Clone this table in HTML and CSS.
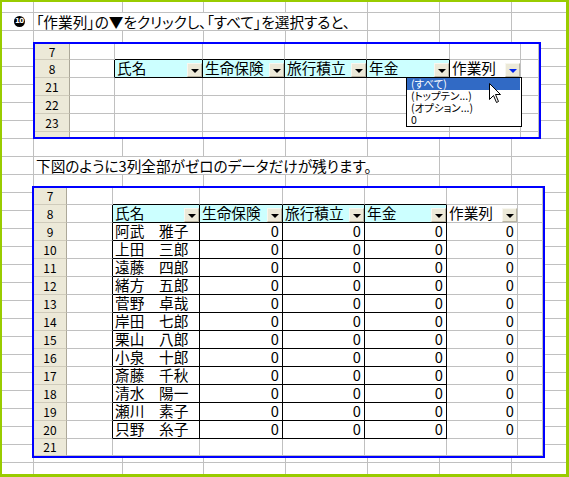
FILE: index.html
```html
<!DOCTYPE html>
<html lang="ja">
<head>
<meta charset="utf-8">
<title>作業列</title>
<link rel="stylesheet" href="styles.css">
</head>
<body>
<div class="frame">
  <div class="note">
    <span class="note-mark"><span class="badge">10</span></span>
    <span class="note-text w1">「作業列」の▼をクリックし、「すべて」を選択すると、</span>
  </div>

  <div class="shot shot1">
    <div class="sheet sheet1">
      <div class="rh">7</div><div class="c"></div><div class="c kb"></div><div class="c kb"></div><div class="c kb"></div><div class="c kb"></div><div class="c"></div><div class="c"></div>
      <div class="rh">8</div><div class="c kr"></div>
      <div class="c k hd"><span>氏名</span><span class="btn"></span></div>
      <div class="c k hd"><span>生命保険</span><span class="btn"></span></div>
      <div class="c k hd"><span>旅行積立</span><span class="btn"></span></div>
      <div class="c k hd"><span>年金</span><span class="btn"></span></div>
      <div class="c hb"><span>作業列</span><span class="btn active"></span></div><div class="c"></div>
      <div class="rh">21</div><div class="c"></div><div class="c"></div><div class="c"></div><div class="c"></div><div class="c"></div><div class="c"></div><div class="c"></div>
      <div class="rh">22</div><div class="c"></div><div class="c"></div><div class="c"></div><div class="c"></div><div class="c"></div><div class="c"></div><div class="c"></div>
      <div class="rh">23</div><div class="c"></div><div class="c"></div><div class="c"></div><div class="c"></div><div class="c"></div><div class="c"></div><div class="c"></div>
      <div class="rh rh-cut"></div><div class="c"></div><div class="c"></div><div class="c"></div><div class="c"></div><div class="c"></div><div class="c"></div><div class="c"></div>
    </div>
    <div class="dd">
      <div class="dd-item sel">(すべて)</div>
      <div class="dd-item">(トップテン...)</div>
      <div class="dd-item">(オプション...)</div>
      <div class="dd-item">0</div>
    </div>
    <svg class="cursor" width="13" height="21" viewBox="0 0 13 21"><path d="M0.5 0.5 V16.5 L4.5 12.5 L7.5 19.5 L9.5 18.5 L6.5 11.5 H11.5 Z" fill="#fff" stroke="#000" stroke-width="1"/></svg>
  </div>

  <div class="note note2">
    <span class="note-mark"></span>
    <span class="note-text w2">下図のように3列全部がゼロのデータだけが残ります。</span>
  </div>

  <div class="shot shot2">
    <div class="sheet sheet2">
      <div class="rh">7</div><div class="c"></div><div class="c kb"></div><div class="c kb"></div><div class="c kb"></div><div class="c kb"></div><div class="c"></div><div class="c"></div>
      <div class="rh">8</div><div class="c kr"></div>
      <div class="c k hd"><span>氏名</span><span class="btn"></span></div>
      <div class="c k hd"><span>生命保険</span><span class="btn"></span></div>
      <div class="c k hd"><span>旅行積立</span><span class="btn"></span></div>
      <div class="c k hd"><span>年金</span><span class="btn"></span></div>
      <div class="c hb"><span>作業列</span><span class="btn"></span></div><div class="c"></div>

      <div class="rh">9</div><div class="c kr"></div><div class="c k">阿武　雅子</div><div class="c k num">0</div><div class="c k num">0</div><div class="c k num">0</div><div class="c num">0</div><div class="c"></div>
      <div class="rh">10</div><div class="c kr"></div><div class="c k">上田　三郎</div><div class="c k num">0</div><div class="c k num">0</div><div class="c k num">0</div><div class="c num">0</div><div class="c"></div>
      <div class="rh">11</div><div class="c kr"></div><div class="c k">遠藤　四郎</div><div class="c k num">0</div><div class="c k num">0</div><div class="c k num">0</div><div class="c num">0</div><div class="c"></div>
      <div class="rh">12</div><div class="c kr"></div><div class="c k">緒方　五郎</div><div class="c k num">0</div><div class="c k num">0</div><div class="c k num">0</div><div class="c num">0</div><div class="c"></div>
      <div class="rh">13</div><div class="c kr"></div><div class="c k">菅野　卓哉</div><div class="c k num">0</div><div class="c k num">0</div><div class="c k num">0</div><div class="c num">0</div><div class="c"></div>
      <div class="rh">14</div><div class="c kr"></div><div class="c k">岸田　七郎</div><div class="c k num">0</div><div class="c k num">0</div><div class="c k num">0</div><div class="c num">0</div><div class="c"></div>
      <div class="rh">15</div><div class="c kr"></div><div class="c k">栗山　八郎</div><div class="c k num">0</div><div class="c k num">0</div><div class="c k num">0</div><div class="c num">0</div><div class="c"></div>
      <div class="rh">16</div><div class="c kr"></div><div class="c k">小泉　十郎</div><div class="c k num">0</div><div class="c k num">0</div><div class="c k num">0</div><div class="c num">0</div><div class="c"></div>
      <div class="rh">17</div><div class="c kr"></div><div class="c k">斎藤　千秋</div><div class="c k num">0</div><div class="c k num">0</div><div class="c k num">0</div><div class="c num">0</div><div class="c"></div>
      <div class="rh">18</div><div class="c kr"></div><div class="c k">清水　陽一</div><div class="c k num">0</div><div class="c k num">0</div><div class="c k num">0</div><div class="c num">0</div><div class="c"></div>
      <div class="rh">19</div><div class="c kr"></div><div class="c k">瀬川　素子</div><div class="c k num">0</div><div class="c k num">0</div><div class="c k num">0</div><div class="c num">0</div><div class="c"></div>
      <div class="rh">20</div><div class="c kr"></div><div class="c k">只野　糸子</div><div class="c k num">0</div><div class="c k num">0</div><div class="c k num">0</div><div class="c num">0</div><div class="c"></div>
      <div class="rh">21</div><div class="c"></div><div class="c"></div><div class="c"></div><div class="c"></div><div class="c"></div><div class="c"></div><div class="c"></div>
    </div>
  </div>
</div>
</body>
</html>
```
FILE: styles.css
```css
* { box-sizing: border-box; }
html, body { margin: 0; padding: 0; background: #fff; }
body {
  width: 569px;
  height: 477px;
  overflow: hidden;
  font-family: "Noto Sans CJK JP", "Noto Sans", sans-serif;
  color: #000;
}
.frame {
  width: 569px;
  height: 477px;
  border-style: solid;
  border-color: #99cc00;
  border-width: 2px 3px 3px 2px;
  background-color: #fff;
  background-image:
    linear-gradient(#c0c0c0, #c0c0c0),
    linear-gradient(#c0c0c0, #c0c0c0),
    linear-gradient(#c0c0c0, #c0c0c0),
    linear-gradient(#c0c0c0, #c0c0c0),
    linear-gradient(#c0c0c0, #c0c0c0),
    linear-gradient(#c0c0c0, #c0c0c0),
    linear-gradient(#c0c0c0, #c0c0c0),
    linear-gradient(to bottom, #c0c0c0 1px, transparent 1px);
  background-size: 1px 100%, 1px 100%, 1px 100%, 1px 100%, 1px 100%, 1px 100%, 1px 100%, 100% 18px;
  background-position: 31px 0, 120px 0, 201px 0, 283px 0, 365px 0, 437px 0, 509px 0, 0 10px;
  background-repeat: no-repeat, no-repeat, no-repeat, no-repeat, no-repeat, no-repeat, no-repeat, repeat-y;
}

/* caption rows */
.note {
  display: flex;
  height: 17px;
  margin-top: 11px;
}
.note2 { margin-top: 18px; }
.note-mark {
  width: 32px;
  flex: none;
  display: flex;
  align-items: center;
  padding-left: 12px;
}
.badge {
  width: 11px;
  height: 11px;
  border-radius: 50%;
  background: #000;
  color: #fff;
  font: bold 7px/11px "DejaVu Sans", sans-serif;
  letter-spacing: -0.6px;
  text-align: center;
  text-indent: -0.5px;
}
.note-text {
  background: #fff;
  padding-left: 2px;
  font-size: 14.67px;
  line-height: 17px;
  white-space: nowrap;
  font-feature-settings: "palt";
}
.w1 { width: 332px; }
.w2 { width: 404px; }

/* embedded sheet shots */
.shot {
  position: relative;
  background: #fff;
  border: 2px solid #0000ff;
}
.shot1 { margin: 12px 0 0 31px; width: 508px; height: 97px; }
.shot2 { margin: 12px 0 0 30px; width: 513px; height: 272px; }

.sheet {
  display: grid;
  height: 100%;
  overflow: hidden;
  font-size: 14.67px;
  line-height: 16px;
  font-feature-settings: "palt";
}
.sheet1 {
  grid-template-columns: 35px 45px 88px 82px 82px 83px 71px 1fr;
  grid-template-rows: 16px repeat(5, 18px);
}
.sheet2 {
  grid-template-columns: 33px 46px 87px 83px 82px 82px 71px 1fr;
  grid-template-rows: 17px repeat(13, 18px) 17px;
}

.rh {
  background: #ece9d8;
  border-right: 1px solid #aca899;
  border-bottom: 1px solid #cfcbbb;
  font-size: 12px;
  line-height: 14px;
  display: flex;
  align-items: center;
  justify-content: center;
}
.c {
  border-right: 1px solid #c0c0c0;
  border-bottom: 1px solid #c0c0c0;
  display: flex;
  align-items: flex-end;
  padding: 0 2px 1px 2px;
  white-space: nowrap;
  min-width: 0;
}
.k { border-right-color: #000; border-bottom-color: #000; }
.kr { border-right-color: #000; }
.kb { border-bottom-color: #000; }
.hd { background: #ccffff; }
.hd, .hb { padding-right: 0; padding-bottom: 0; }
.hd > span:first-child, .hb > span:first-child { padding-bottom: 1px; }
.num { justify-content: flex-end; padding-right: 3px; }

.btn {
  margin-left: auto;
  flex: none;
  width: 15px;
  height: 14px;
  background: #ece9d8;
  border: 1px solid;
  border-color: #f8f7f0 #b8b4a2 #b8b4a2 #f8f7f0;
  display: flex;
  align-items: center;
  justify-content: center;
}
.btn::after {
  content: "";
  width: 0;
  height: 0;
  margin-top: 2px;
  border-left: 4px solid transparent;
  border-right: 4px solid transparent;
  border-top: 4px solid #000;
}
.btn.active::after { border-top-color: #0022ee; }

/* dropdown */
.dd {
  position: absolute;
  left: 371px;
  top: 33px;
  width: 116px;
  height: 50px;
  border: 1px solid #000;
  background: #fff;
  font-size: 10.5px;
  line-height: 12px;
  font-feature-settings: "palt";
}
.dd-item {
  height: 12px;
  padding-left: 4px;
  margin-right: 1px;
  white-space: nowrap;
}
.dd-item.sel { background: #316ac5; color: #fff; }
.cursor {
  position: absolute;
  left: 454px;
  top: 39px;
}
```
